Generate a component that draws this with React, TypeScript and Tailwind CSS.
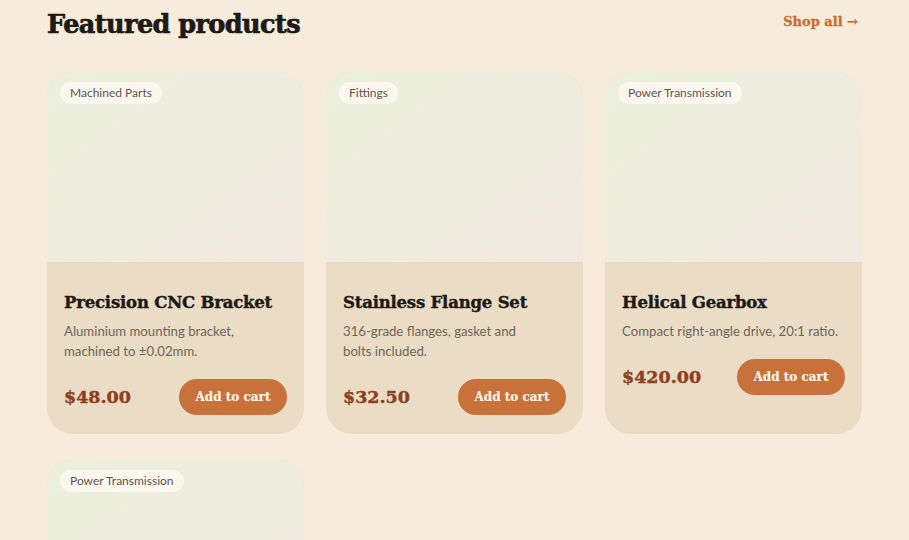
type Product = { tag: string; name: string; desc: string; price: string };

const products: Product[] = [
  { tag: "Machined Parts", name: "Precision CNC Bracket", desc: "Aluminium mounting bracket, machined to ±0.02mm.", price: "$48.00" },
  { tag: "Fittings", name: "Stainless Flange Set", desc: "316-grade flanges, gasket and bolts included.", price: "$32.50" },
  { tag: "Power Transmission", name: "Helical Gearbox", desc: "Compact right-angle drive, 20:1 ratio.", price: "$420.00" },
  { tag: "Power Transmission", name: "Timing Belt Pulley", desc: "HTD 5M profile, keyed bore.", price: "$18.90" },
];

const serif = "font-['DejaVu_Serif',serif]";
const sans = "font-['Lato','Noto_Sans',sans-serif]";

export default function App() {
  return (
    <div className="h-[540px] overflow-hidden bg-[#f7ebdb] px-[47px] pt-[4px]">
      {/* Header row */}
      <div className="flex items-center justify-between h-[40px]">
        <h2
          className={`${serif} text-[25.5px] font-bold tracking-[-0.55px] text-[#1d1915] [-webkit-text-stroke:0.7px_#1d1915]`}
        >
          Featured products
        </h2>
        <a
          className={`${serif} text-[13px] font-bold text-[#c76e32] mr-[4px] mb-[4px] [-webkit-text-stroke:0.3px_#c76e32]`}
        >
          Shop all →
        </a>
      </div>

      {/* Grid of cards */}
      <div className="grid grid-cols-3 gap-x-[22px] gap-y-[26px] mt-[28px]">
        {products.map((p, i) => (
          <div key={i} className="rounded-[26px] overflow-hidden bg-[#ebdcc5]">
            <div className="relative h-[190px] bg-gradient-to-br from-[#ebf0dd] to-[#f2eae2]">
              <span
                className={`${sans} absolute left-[13px] top-[10px] h-[22px] px-[10px] flex items-center rounded-full bg-[#fbf7ef] text-[12px] text-[#5b5650]`}
              >
                {p.tag}
              </span>
            </div>
            <div className="px-[17px] pt-[29px] pb-[19px]">
              <h3
                className={`${serif} text-[16.5px] font-bold tracking-[-0.2px] leading-[24px] text-[#1d1915] [-webkit-text-stroke:0.4px_#1d1915]`}
              >
                {p.name}
              </h3>
              <p className={`${sans} mt-[6px] text-[13.2px] leading-[20px] text-[#6e655b] text-pretty`}>{p.desc}</p>
              <div className="mt-[18px] flex items-center justify-between">
                <span
                  className={`${serif} text-[17.5px] font-bold text-[#8c401c] [-webkit-text-stroke:0.4px_#8c401c]`}
                >
                  {p.price}
                </span>
                <button
                  className={`${serif} h-[36px] w-[108px] rounded-full bg-[#c8713a] text-[12px] font-bold text-[#fbf3e8] [-webkit-text-stroke:0.2px_#fbf3e8]`}
                >
                  Add to cart
                </button>
              </div>
            </div>
          </div>
        ))}
      </div>
    </div>
  );
}
